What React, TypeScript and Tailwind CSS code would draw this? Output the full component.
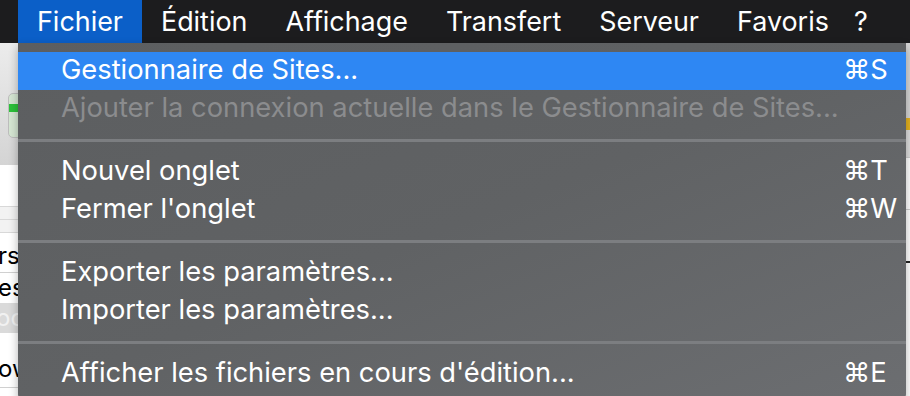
import React from "react";

type Item =
  | { kind: "item"; label: string; shortcut?: string; active?: boolean; disabled?: boolean }
  | { kind: "sep" };

const menus = ["Fichier", "Édition", "Affichage", "Transfert", "Serveur", "Favoris"];

const items: Item[] = [
  { kind: "item", label: "Gestionnaire de Sites...", shortcut: "⌘S", active: true },
  { kind: "item", label: "Ajouter la connexion actuelle dans le Gestionnaire de Sites...", disabled: true },
  { kind: "sep" },
  { kind: "item", label: "Nouvel onglet", shortcut: "⌘T" },
  { kind: "item", label: "Fermer l'onglet", shortcut: "⌘W" },
  { kind: "sep" },
  { kind: "item", label: "Exporter les paramètres..." },
  { kind: "item", label: "Importer les paramètres..." },
  { kind: "sep" },
  { kind: "item", label: "Afficher les fichiers en cours d'édition...", shortcut: "⌘E" },
];

function MenuRow({ item }: { item: Item }) {
  if (item.kind === "sep") {
    return (
      <div className="py-[11.5px]">
        <div className="h-[3px] bg-[#7c7e81]" />
      </div>
    );
  }
  return (
    <div
      className={`flex items-center h-[37.5px] pl-[43px] pr-[21px] ${
        item.active ? "bg-[#2e87f3]" : ""
      } ${item.disabled ? "text-[#8b8c8e]" : "text-white"}`}
    >
      <span className="flex-1 whitespace-nowrap">{item.label}</span>
      {item.shortcut && <span className="w-[42px] whitespace-nowrap">{item.shortcut}</span>}
    </div>
  );
}

export default function App() {
  return (
    <div
      className="w-[910px] h-[396px] overflow-hidden flex flex-col bg-[#f4f4f4] text-[27.3px]"
      style={{ fontFamily: "Inter, 'Liberation Sans', sans-serif" }}
    >
      {/* menu bar */}
      <div className="h-[43px] flex bg-[#1c1c1e] pl-[18px] text-white text-[26.9px] shrink-0">
        {menus.map((m, i) => (
          <div
            key={m}
            className={`flex items-center px-[19px] whitespace-nowrap ${i === 0 ? "bg-[#0b5fc8]" : ""}`}
          >
            {m}
          </div>
        ))}
        <div className="flex items-center pl-[6px] pr-[19px]">?</div>
      </div>

      {/* background window + dropdown */}
      <div className="relative flex-1 flex">
        <div className="w-[18px] flex flex-col text-black overflow-hidden text-[24px] leading-none">
          <div className="h-[122px] bg-gradient-to-b from-[#ececec] to-[#d4d4d4] relative shrink-0">
            <div className="absolute left-[8px] top-[50px] w-[16px] h-[45px] rounded-[5px] border border-[#bdbdbd] bg-[#d5e6d2] overflow-hidden">
              <div className="h-[8px] bg-[#2cc23a] mt-[10px]" />
            </div>
          </div>
          <div className="h-[42px] bg-white border-b border-[#d8d8d8] shrink-0" />
          <div className="h-[13px] bg-[#f2f2f2] border-b border-[#d8d8d8] shrink-0" />
          <div className="h-[13px] bg-[#f2f2f2] border-b border-[#d8d8d8] shrink-0" />
          <div className="h-[40px] bg-white border-b border-[#d0d0d0] flex items-end pb-[4px] shrink-0">
            <span className="whitespace-nowrap -ml-[2px]">rs</span>
          </div>
          <div className="h-[30px] bg-white flex items-center shrink-0">
            <span className="whitespace-nowrap -ml-[2px]">es</span>
          </div>
          <div className="h-[30px] bg-[#dadada] flex items-center text-[#f1f1f1] shrink-0">
            <span className="whitespace-nowrap -ml-[4px]">oc</span>
          </div>
          <div className="h-[55px] bg-white border-b border-[#d0d0d0] flex items-end pb-[6px] shrink-0">
            <span className="whitespace-nowrap -ml-[2px]">ow</span>
          </div>
          <div className="flex-1 bg-white" />
        </div>
        <div className="flex-1" />
        <div className="w-[4px] flex flex-col">
          <div className="h-[75px] bg-[#d6d6d6] shrink-0" />
          <div className="h-[12px] bg-[#e6b320] shrink-0" />
          <div className="h-[28px] bg-[#dedede] border-b border-[#cfcfcf] shrink-0" />
          <div className="h-[52px] bg-white border-b border-[#cfcfcf] shrink-0" />
          <div className="h-[53px] bg-white border-b-2 border-[#222] shrink-0" />
          <div className="flex-1 bg-white" />
        </div>

        <div className="absolute left-[18px] top-0 w-[888px] pt-[9px] pb-[8px] rounded-b-[7px] overflow-hidden bg-gradient-to-br from-[#5c5e60] via-[#606264] to-[#6c6e71] shadow-[0_4px_10px_rgba(0,0,0,0.3)]">
          {items.map((it, i) => (
            <MenuRow key={i} item={it} />
          ))}
        </div>
      </div>
    </div>
  );
}
